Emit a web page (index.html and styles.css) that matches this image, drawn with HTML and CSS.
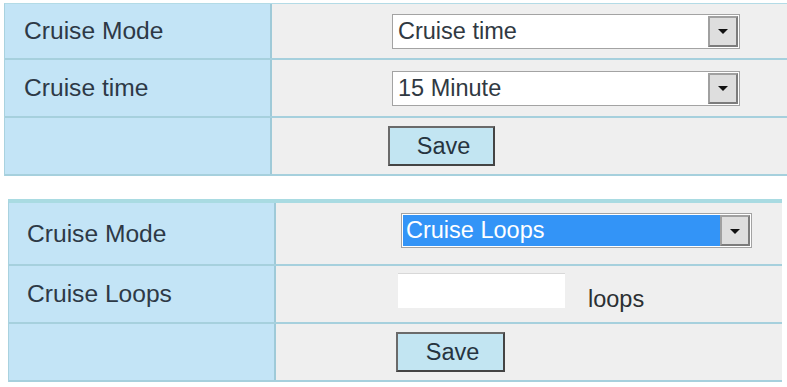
FILE: index.html
```html
<!DOCTYPE html>
<html>
<head>
<meta charset="utf-8">
<link rel="stylesheet" href="styles.css">
</head>
<body>
<section class="panel panel-a">
  <div class="row">
    <div class="label">Cruise Mode</div>
    <div class="field">
      <div class="select"><span class="value">Cruise time</span><span class="arrow"></span></div>
    </div>
  </div>
  <div class="row">
    <div class="label">Cruise time</div>
    <div class="field">
      <div class="select select-2"><span class="value">15 Minute</span><span class="arrow"></span></div>
    </div>
  </div>
  <div class="row">
    <div class="label"></div>
    <div class="field">
      <button class="save">Save</button>
    </div>
  </div>
</section>

<section class="panel panel-b">
  <div class="row">
    <div class="label">Cruise Mode</div>
    <div class="field">
      <div class="select select-hl"><span class="value">Cruise Loops</span><span class="arrow"></span></div>
    </div>
  </div>
  <div class="row">
    <div class="label">Cruise Loops</div>
    <div class="field field-loops">
      <div class="textbox"></div>
      <span class="unit">loops</span>
    </div>
  </div>
  <div class="row">
    <div class="label"></div>
    <div class="field">
      <button class="save save-b">Save</button>
    </div>
  </div>
</section>
</body>
</html>
```

FILE: styles.css
```css
html, body {
  margin: 0;
  padding: 0;
  background: #ffffff;
}
body {
  font-family: "Liberation Sans", Arial, sans-serif;
  font-size: 23.5px;
  color: #2e3a47;
  width: 787px;
  height: 387px;
  overflow: hidden;
}
.panel {
  display: flex;
  flex-direction: column;
}
.panel-a {
  margin: 3px 0 0 4px;
  border-top: 1px solid #b3dbe6;
  border-left: 1px solid #a9d2df;
}
.panel-b {
  margin: 23px 5px 0 8px;
  border-top: 4px solid #a9dbe2;
  border-left: 1px solid #a9d2df;
}
.row {
  display: grid;
  grid-template-columns: 267px 1fr;
  border-bottom: 2px solid #a6d0dd;
}
.panel-a .row { height: 56px; }
.panel-a .row:first-child { height: 54px; }
.panel-b .row { height: 56px; }
.panel-b .row:first-child { height: 61px; }
.panel-b .row:last-child { height: 56px; }
.label {
  background: #c3e4f6;
  border-right: 2px solid #9fcad8;
  display: flex;
  align-items: center;
  padding-left: 19px;
  font-size: 24.6px;
  color: #2d3946;
}
.panel-b .label { padding-left: 18px; }
.field {
  background: #efefef;
  display: flex;
  align-items: center;
  padding-left: 120px;
}
.panel-b .field { padding-left: 124px; }
.select {
  width: 348px;
  height: 35px;
  box-sizing: border-box;
  background: #ffffff;
  border: 1px solid #a3a3a3;
  display: flex;
  align-items: stretch;
  padding: 1px;
}
.select .value {
  flex: 1;
  display: flex;
  align-items: center;
  padding-left: 4px;
  color: #303942;
}
.select .arrow {
  width: 30px;
  box-sizing: border-box;
  background: #dedede;
  border: 2px solid #8e8e8e;
  border-color: #a0a0a0 #7c7c7c #7c7c7c #a0a0a0;
  position: relative;
}
.select .arrow::after {
  content: "";
  position: absolute;
  left: 50%;
  top: 50%;
  margin: -2px 0 0 -5px;
  border-left: 5px solid transparent;
  border-right: 5px solid transparent;
  border-top: 5px solid #111;
}
.select-2 { height: 35px; }
.select-hl {
  width: 351px;
  height: 35px;
  margin-top: -6px;
  margin-left: 1px;
}
.select-hl .value {
  background: #3394f7;
  color: #ffffff;
  padding-left: 3px;
}
.textbox {
  width: 167px;
  height: 35px;
  background: #ffffff;
  border-top: 1px solid #d8d8d8;
  box-sizing: border-box;
  margin-top: -8px;
  margin-left: -2px;
}
.unit {
  margin-left: 23px;
  margin-top: 10px;
  color: #2b2f33;
}
.save {
  font-family: "Liberation Sans", Arial, sans-serif;
  font-size: 23.5px;
  color: #26343f;
  width: 107px;
  height: 40px;
  background: #c2e5f2;
  border: 2px solid #5c5c5c;
  border-color: #6a6a6a #444 #444 #6a6a6a;
  padding: 0 0 0 4px;
  margin-left: -4px;
}
.save-b {
  width: 109px;
  margin-left: -4px;
}
```
